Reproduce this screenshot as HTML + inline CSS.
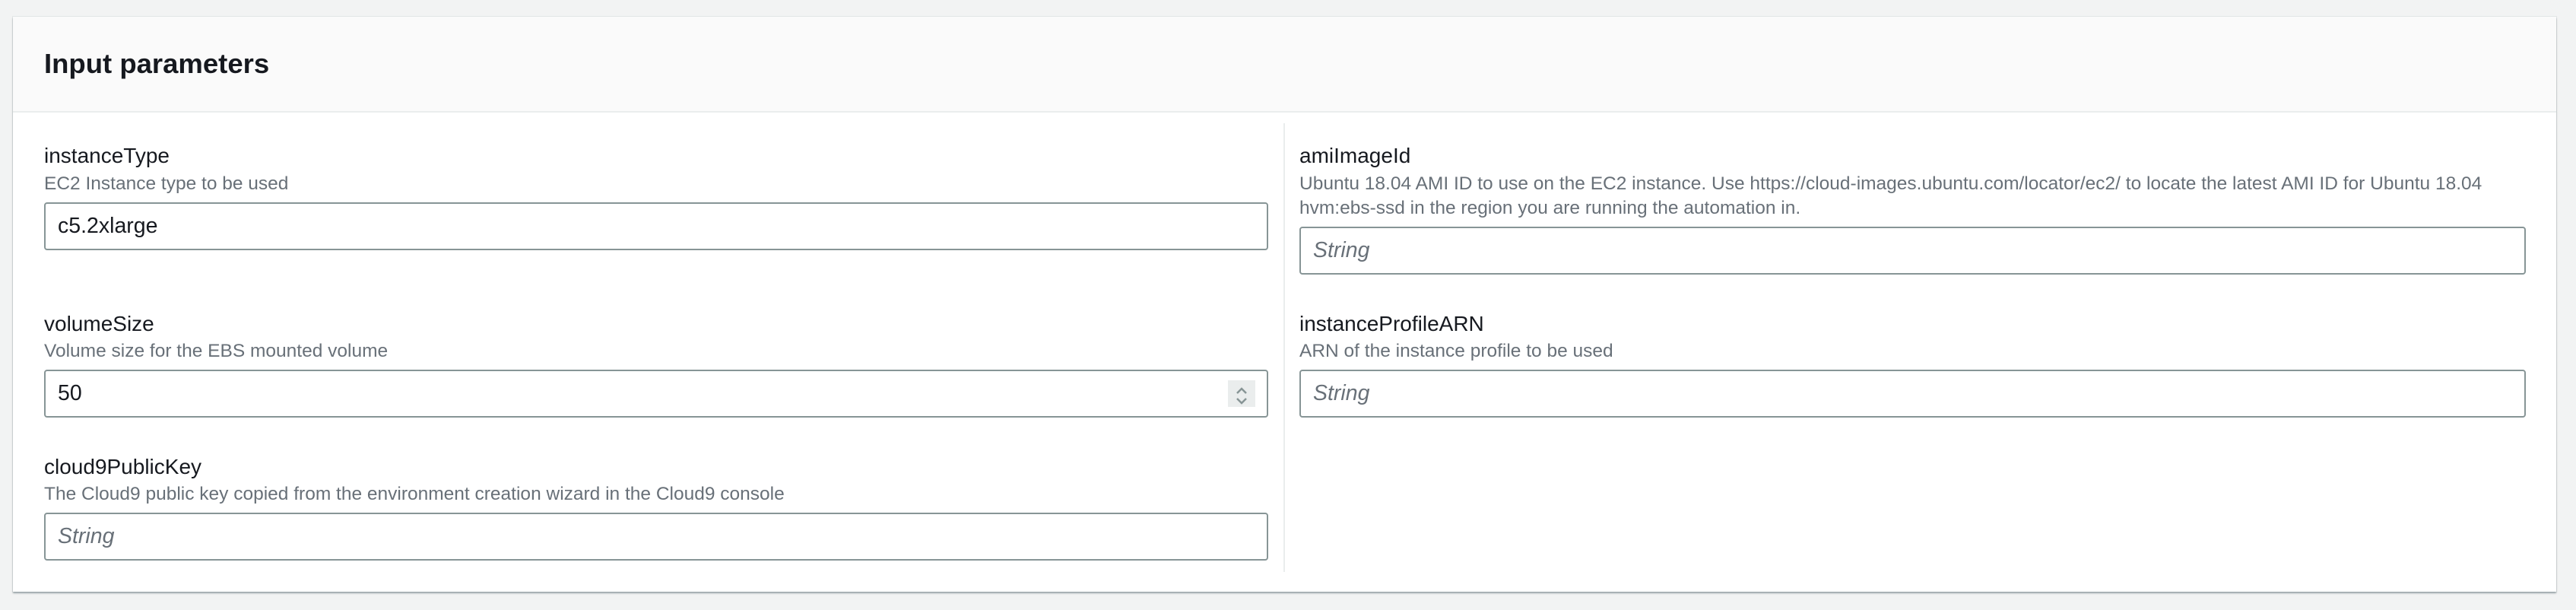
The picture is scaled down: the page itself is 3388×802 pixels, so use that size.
<!DOCTYPE html>
<html><head><meta charset="utf-8"><style>
*{box-sizing:border-box;margin:0;padding:0}
html,body{width:3388px;height:802px;background:#f2f3f3;overflow:hidden;font-family:"Liberation Sans",sans-serif}
.card{position:absolute;left:17px;top:22px;width:3345px;height:756px;background:#fff;box-shadow:0 2px 2px rgba(0,28,36,.35),0 0 0 1px rgba(0,28,36,.06)}
.hdr{position:absolute;left:0;top:0;width:100%;height:126px;background:#fafafa;border-bottom:2px solid #eaeded}
.hdr h1{position:absolute;left:41px;top:41px;font-size:36.5px;font-weight:bold;color:#16191f;line-height:42px}
.div{position:absolute;left:1671px;top:140px;width:2px;height:590px;background:#eaeded}
.lab{position:absolute;font-size:28px;color:#16191f;white-space:nowrap;line-height:34px}
.desc{position:absolute;font-size:24.5px;color:#687078;white-space:nowrap;line-height:32px}
.inp{position:absolute;height:63px;border:2px solid #879596;border-radius:4px;background:#fff;font-size:28.5px;line-height:59px;padding-left:16px;color:#16191f}
.ph{color:#687078;font-style:italic}
.spin{position:absolute;right:15px;top:12px;width:36px;height:35px;background:#eaeded}
</style></head><body>
<div class="card">
<div class="hdr"><h1>Input parameters</h1></div>
<div class="div"></div>

<div class="lab" style="left:41px;top:166px">instanceType</div>
<div class="desc" style="left:41px;top:204px">EC2 Instance type to be used</div>
<div class="inp" style="left:41px;top:244px;width:1610px">c5.2xlarge</div>

<div class="lab" style="left:41px;top:387px">volumeSize</div>
<div class="desc" style="left:41px;top:424px">Volume size for the EBS mounted volume</div>
<div class="inp" style="left:41px;top:464px;width:1610px">50<div class="spin"><svg width="36" height="35" viewBox="0 0 36 35"><path d="M12 14l6-6 6 6M12 21l6 6 6-6" fill="none" stroke="#879596" stroke-width="2.5"/></svg></div></div>

<div class="lab" style="left:41px;top:575px">cloud9PublicKey</div>
<div class="desc" style="left:41px;top:612px">The Cloud9 public key copied from the environment creation wizard in the Cloud9 console</div>
<div class="inp ph" style="left:41px;top:652px;width:1610px">String</div>

<div class="lab" style="left:1692px;top:166px">amiImageId</div>
<div class="desc" style="left:1692px;top:204px">Ubuntu 18.04 AMI ID to use on the EC2 instance. Use https://cloud-images.ubuntu.com/locator/ec2/ to locate the latest AMI ID for Ubuntu 18.04<br>hvm:ebs-ssd in the region you are running the automation in.</div>
<div class="inp ph" style="left:1692px;top:276px;width:1613px">String</div>

<div class="lab" style="left:1692px;top:387px">instanceProfileARN</div>
<div class="desc" style="left:1692px;top:424px">ARN of the instance profile to be used</div>
<div class="inp ph" style="left:1692px;top:464px;width:1613px">String</div>
</div>
</body></html>
